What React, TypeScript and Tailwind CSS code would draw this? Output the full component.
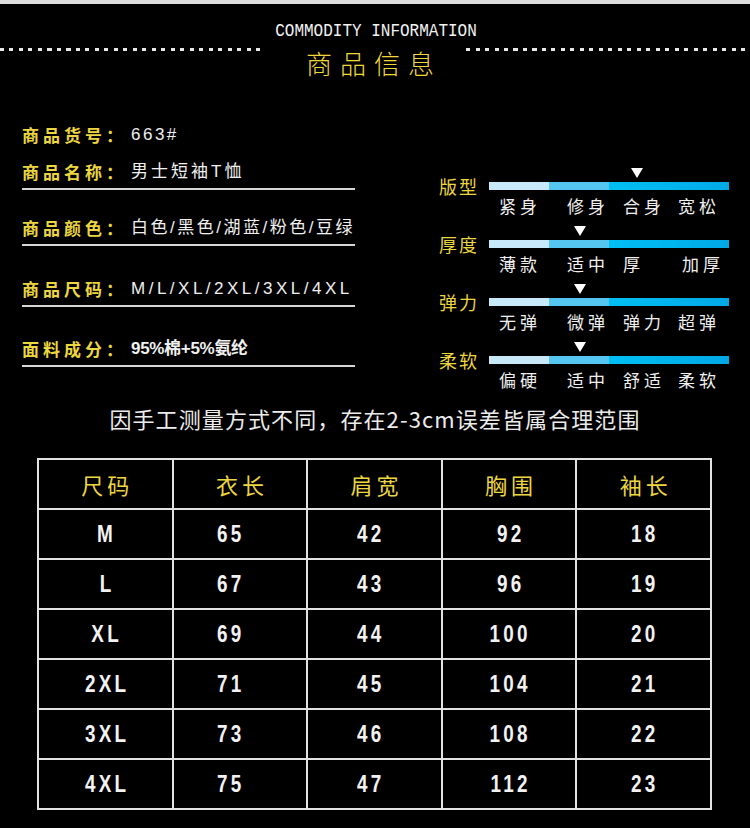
import React from "react"

const cjk = "font-['Noto_Sans_CJK_SC',sans-serif]"
const mixed = "font-['Liberation_Sans','Noto_Sans_CJK_SC',sans-serif]"

const info = [
  { label: "商品货号：", value: "663#", line: false, track: "tracking-[2.5px]" },
  { label: "商品名称：", value: "男士短袖T恤", line: true, track: "tracking-[3px]" },
  { label: "商品颜色：", value: "白色/黑色/湖蓝/粉色/豆绿", line: true, track: "tracking-[2.5px]" },
  { label: "商品尺码：", value: "M/L/XL/2XL/3XL/4XL", line: true, track: "tracking-[3.5px]" },
  { label: "面料成分：", value: "95%棉+5%氨纶", line: true, track: "tracking-[-0.3px] font-bold" },
]

// gap above each info row (px)
const infoGaps = ["mt-0", "mt-[13px]", "mt-[26px]", "mt-[31px]", "mt-[30px]"]

const scales = [
  { name: "版型", marker: "ml-[142px]", words: ["紧身", "修身", "合身", "宽松"] },
  { name: "厚度", marker: "ml-[85px]", words: ["薄款", "适中", "厚", "加厚"] },
  { name: "弹力", marker: "ml-[85px]", words: ["无弹", "微弹", "弹力", "超弹"] },
  { name: "柔软", marker: "ml-[85px]", words: ["偏硬", "适中", "舒适", "柔软"] },
]

const wordCols = ["w-[68px]", "w-[56px]", "w-[55px]", "w-[60px]"]

const sizes = [
  ["M", "65", "42", "92", "18"],
  ["L", "67", "43", "96", "19"],
  ["XL", "69", "44", "100", "20"],
  ["2XL", "71", "45", "104", "21"],
  ["3XL", "73", "46", "108", "22"],
  ["4XL", "75", "47", "112", "23"],
]

const heads = ["尺码", "衣长", "肩宽", "胸围", "袖长"]

const dots = "h-[3px] bg-[repeating-linear-gradient(90deg,#e8e8e8_0px,#e8e8e8_4px,transparent_4px,transparent_9.5px)]"

function Scale({ s }: { s: (typeof scales)[number] }) {
  return (
    <div className="flex flex-col">
      <div className="h-[10px] pl-[50px]">
        <div
          className={`${s.marker} w-0 h-0 border-x-[6px] border-x-transparent border-t-[10px] border-t-white`}
        />
      </div>
      <div className="mt-[4px] flex items-center h-[8px]">
        <div
          className={`w-[50px] h-[8px] flex items-center text-[18px] tracking-[2px] text-[#ecd641] ${cjk}`}
        >
          {s.name}
        </div>
        <div className="flex w-[240px] h-[8px]">
          <div className="w-[60px] bg-[#c8e9f9]" />
          <div className="w-[60px] bg-[#55c6ef]" />
          <div className="flex-1 bg-[linear-gradient(90deg,#00bff3,#00a9e6)]" />
        </div>
      </div>
      <div className={`mt-[5px] h-[22px] pl-[60px] flex text-[17px] leading-[22px] tracking-[4px] text-[#f0f0f0] ${cjk}`}>
        {s.words.map((w, i) => (
          <span key={i} className={`${wordCols[i]} ${i === 3 && w === "加厚" ? "pl-[4px]" : ""} whitespace-nowrap`}>
            {w}
          </span>
        ))}
      </div>
    </div>
  )
}

export default function App() {
  return (
    <div className="w-[750px] h-[828px] bg-black overflow-hidden">
      <div className="h-[4px] bg-[#dedede]" />

      {/* heading */}
      <div className="mt-[17px] h-[20px] flex justify-center items-center">
        <span className="font-['Liberation_Mono',monospace] text-[16px] leading-[20px] text-[#f2f2f2] scale-y-[1.2] pl-[2px]">
          COMMODITY INFORMATION
        </span>
      </div>
      <div className="flex h-[38px]">
        <div className={`w-[265px] mt-[7px] ${dots}`} />
        <div className="w-[201px] flex justify-center pl-[17px]">
          <span className={`mt-[7px] text-[26px] leading-[30px] tracking-[8px] text-[#f0d83a] font-light ${cjk}`}>
            商品信息
          </span>
        </div>
        <div className={`flex-1 mt-[7px] ${dots}`} />
      </div>

      {/* info + scales */}
      <div className="mt-[44px] h-[283px] flex">
        <div className="w-[439px] pl-[22px] flex flex-col">
          {info.map((row, i) => (
            <div key={row.label} className={`${infoGaps[i]} w-[333px]`}>
              <div className="h-[24px] flex items-center whitespace-nowrap">
                <span className={`text-[17px] tracking-[4px] font-bold text-[#ecd641] ${cjk}`}>
                  {row.label}
                </span>
                <span className={`ml-[4px] text-[17px] text-[#f0f0f0] ${row.track} ${mixed}`}>
                  {row.value}
                </span>
              </div>
              {row.line && <div className="mt-[4px] h-[2px] bg-[#d6d6d6]" />}
            </div>
          ))}
        </div>
        <div className="mt-[45px] flex flex-col gap-[9px]">
          {scales.map((s) => (
            <Scale key={s.name} s={s} />
          ))}
        </div>
      </div>

      {/* note */}
      <div className="-mt-[3px] h-[30px] flex justify-center">
        <span className={`text-[22px] leading-[30px] tracking-[1.1px] text-[#ececec] ${cjk}`}>
          因手工测量方式不同，存在2-3cm误差皆属合理范围
        </span>
      </div>

      {/* size table */}
      <table className="mt-[25px] ml-[37px] w-[675px] table-fixed border-2 border-[#e2e2e2]">
        <thead>
          <tr className="h-[50px]">
            {heads.map((h) => (
              <th
                key={h}
                className={`border-2 border-[#e2e2e2] text-center font-normal text-[22px] tracking-[4px] pl-[4px] text-[#ecd641] ${cjk}`}
              >
                {h}
              </th>
            ))}
          </tr>
        </thead>
        <tbody>
          {sizes.map((r) => (
            <tr key={r[0]} className="h-[50px]">
              {r.map((c, j) => (
                <td
                  key={j}
                  className={`border-2 border-[#e2e2e2] text-center text-[#f2f2f2] ${
                    j === 1 ? "pr-[18px]" : j === 2 ? "pr-[8px]" : "pl-[3px]"
                  }`}
                >
                  <span className="inline-block scale-x-[0.82] font-bold text-[23px] tracking-[4px] font-['Liberation_Sans',sans-serif]">
                    {c}
                  </span>
                </td>
              ))}
            </tr>
          ))}
        </tbody>
      </table>
    </div>
  )
}
